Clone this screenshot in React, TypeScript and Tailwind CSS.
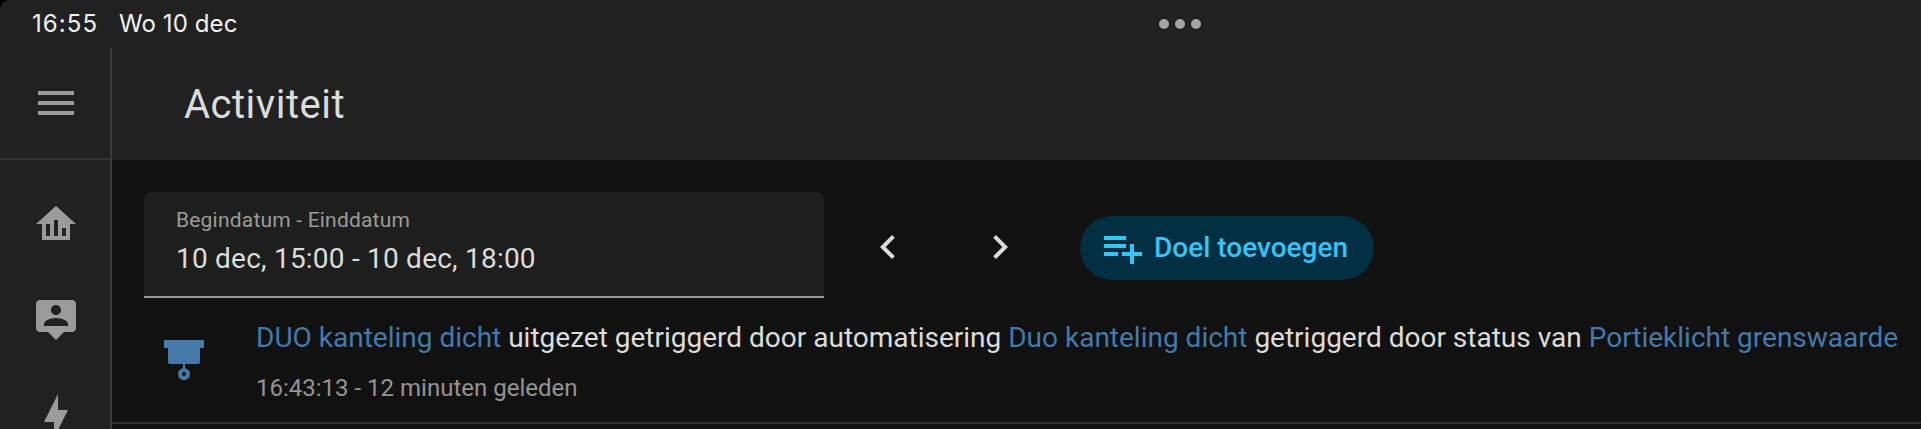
import React from 'react';

const Icon = ({ d, className }: { d: string; className?: string }) => (
  <svg viewBox="0 0 24 24" className={`h-12 w-12 shrink-0 fill-current ${className ?? ''}`}>
    <path d={d} fillRule="evenodd" />
  </svg>
);

const icons = {
  menu: 'M3,6H21V8H3V6M3,11H21V13H3V11M3,16H21V18H3V16Z',
  home: 'M12 3L2 12H5V20H19V12H22L12 3M9 18H7V12H9V18M13 18H11V10H13V18M17 18H15V14H17V18Z',
  account:
    'M4 2H20C21.1 2 22 2.9 22 4V16C22 17.1 21.1 18 20 18H16L12 22L8 18H4C2.9 18 2 17.1 2 16V4C2 2.9 2.9 2 4 2M12 4.5C10.6 4.5 9.5 5.6 9.5 7C9.5 8.4 10.6 9.5 12 9.5C13.4 9.5 14.5 8.4 14.5 7C14.5 5.6 13.4 4.5 12 4.5M6 15H18V14C18 12 14 11 12 11C10 11 6 12 6 14V15Z',
  flash: 'M11 15H6L13 1V9H18L11 23V15Z',
  screen:
    'M2.5 2H21.5C21.8 2 22 2.2 22 2.5V5.5C22 5.8 21.8 6 21.5 6H20V13C20 13.6 19.6 14 19 14H12.5V16.1C13.9 16.3 15 17.5 15 19C15 20.7 13.7 22 12 22C10.3 22 9 20.7 9 19C9 17.5 10.1 16.3 11.5 16.1V14H5C4.4 14 4 13.6 4 13V6H2.5C2.2 6 2 5.8 2 5.5V2.5C2 2.2 2.2 2 2.5 2M12 18C11.4 18 11 18.4 11 19C11 19.6 11.4 20 12 20C12.6 20 13 19.6 13 19C13 18.4 12.6 18 12 18Z',
  left: 'M15.41,16.58L10.83,12L15.41,7.41L14,6L8,12L14,18L15.41,16.58Z',
  right: 'M8.59,16.58L13.17,12L8.59,7.41L10,6L16,12L10,18L8.59,16.58Z',
  playlist: 'M3 16H10V14H3M18 14V10H16V14H12V16H16V20H18V16H22V14M14 6H3V8H14M14 10H3V12H14V10Z',
};

const Link = ({ children }: { children: React.ReactNode }) => (
  <span className="text-[#4479aa]">{children}</span>
);

export default function App() {
  return (
    <div className="h-[429px] w-[1921px] overflow-hidden bg-black font-['Roboto',sans-serif]">
      <div className="flex h-full flex-col overflow-hidden rounded-tl-[10px] bg-[#212121]">
        {/* status bar */}
        <div className="flex h-12 shrink-0 items-center font-['Inter',sans-serif] text-[24px] text-[#f2f2f2]">
          <div className="flex w-[1921px] items-center pl-8">
            <span className="w-[87px] tracking-[1.1px]">16:55</span>
            <span className="tracking-[0.1px]">Wo 10 dec</span>
            <div className="ml-[921px] flex gap-1.5">
              <span className="h-2.5 w-2.5 rounded-full bg-[#a3a3a3]" />
              <span className="h-2.5 w-2.5 rounded-full bg-[#a3a3a3]" />
              <span className="h-2.5 w-2.5 rounded-full bg-[#a3a3a3]" />
            </div>
          </div>
        </div>

        <div className="flex min-h-0 flex-1">
          {/* sidebar */}
          <aside className="flex w-[112px] shrink-0 flex-col border-r-2 border-[#3a3a3a] text-[#9b9b9b]">
            <div className="flex h-[112px] shrink-0 items-center border-b-2 border-[#333333] pl-8">
              <Icon d={icons.menu} />
            </div>
            <div className="flex flex-col gap-12 pl-8 pt-10">
              <Icon d={icons.home} />
              <Icon d={icons.account} />
              <Icon d={icons.flash} />
            </div>
          </aside>

          <div className="flex min-w-0 flex-1 flex-col">
            <header className="flex h-[112px] shrink-0 items-center pl-[72px] pt-0.5 text-[40px] tracking-[0.5px] text-[#dcdcdc]">
              Activiteit
            </header>

            <main className="flex-1 bg-[#111111]">
              <div className="flex items-center pl-8 pt-8">
                <div className="h-[106px] w-[680px] rounded-t-lg border-b-2 border-[#999999] bg-[#1e1e1e] pl-8 pt-4">
                  <div className="text-[21px] leading-6 tracking-[0.2px] text-[#9b9b9b]">Begindatum - Einddatum</div>
                  <div className="mt-[7px] text-[28px] leading-10 tracking-[0.22px] text-[#dcdcdc]">10 dec, 15:00 - 10 dec, 18:00</div>
                </div>
                <div className="ml-[40px] mt-[3px] flex gap-16 text-[#dcdcdc]">
                  <Icon d={icons.left} />
                  <Icon d={icons.right} />
                </div>
                <button className="ml-[56px] mt-[6px] flex h-16 w-[294px] items-center rounded-full bg-[#022f41] pl-[18px] text-[28px] font-medium text-[#36c3f8]">
                  <Icon d={icons.playlist} />
                  <span className="ml-2">Doel toevoegen</span>
                </button>
              </div>

              <div className="mt-[3px] flex h-[123px] border-b-2 border-[#2f2f2f] pl-12 pt-[17px]">
                <Icon d={icons.screen} className="mt-[18px] text-[#4479aa]" />
                <div className="ml-12">
                  <div className="whitespace-nowrap text-[28px] leading-10 text-[#dcdcdc]">
                    <Link>DUO kanteling dicht</Link> uitgezet getriggerd door automatisering{' '}
                    <Link>Duo kanteling dicht</Link> getriggerd door status van{' '}
                    <Link>Portieklicht grenswaarde</Link>
                  </div>
                  <div className="mt-[14px] text-2xl leading-8 text-[#949494]">16:43:13 - 12 minuten geleden</div>
                </div>
              </div>
            </main>
          </div>
        </div>
      </div>
    </div>
  );
}
